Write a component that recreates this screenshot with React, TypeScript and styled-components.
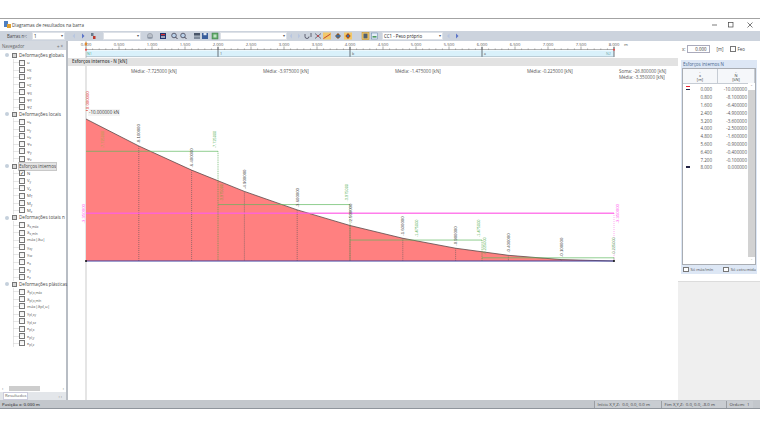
import React from "react";
import styled, { createGlobalStyle } from "styled-components";

const Global = createGlobalStyle`
  html, body { margin: 0; padding: 0; background: #fff; }
  body { font-family: "Open Sans", "Liberation Sans", sans-serif; color: #333; }
`;
const Page = styled.div`width: 760px; height: 428px; padding-top: 18px; box-sizing: border-box; overflow: hidden;`;
const Win = styled.div`height: 391px; display: flex; flex-direction: column; border-top: 1px solid #a3a3a3; box-sizing: border-box; background: #f0f0f0;`;
const TitleBar = styled.div`height: 11.5px; flex: none; background: #fff; display: flex; align-items: center; padding-left: 4px; font-size: 4.55px; color: #444;`;
const TitleIcon = styled.svg`flex: none; margin-right: 1px;`;
const Spacer = styled.div`flex: 1;`;
const WinBtn = styled.div<{ $w: number }>`width: ${p => p.$w}px; flex: none; display: flex; justify-content: center;`;
const Toolbar = styled.div`height: 10.5px; flex: none; background: #ccd3dd; display: flex; align-items: center; font-size: 4.4px; color: #444;`;
const Lbl = styled.span<{ $w: number }>`width: ${p => p.$w}px; flex: none; white-space: nowrap;`;
const Input = styled.div<{ $w: number }>`width: ${p => p.$w}px; height: 8px; flex: none; box-sizing: border-box; background: #fff; border: 0.7px solid #dde1e7; line-height: 6.6px; font-size: 4.4px; padding-left: 1px; color: #222; position: relative; white-space: nowrap;`;
const Caret = styled.span`position: absolute; right: 1px; top: 0; color: #555; font-size: 3.5px;`;
const Icons = styled.svg`flex: none; display: block;`;
const Body = styled.div`flex: 1; display: flex; min-height: 0;`;
const Nav = styled.div`width: 68px; flex: none; box-sizing: border-box; background: #fff; display: flex; flex-direction: column; border-right: 2px solid #b8bdc4;`;
const NavHead = styled.div`height: 9px; flex: none; background: #d4d9e0; display: flex; align-items: center; justify-content: space-between; padding: 0 3px 0 2px; font-size: 4.4px; color: #666;`;
const Tree = styled.div`flex: 1; padding-top: 1.5px; display: flex; flex-direction: column;`;
const GroupRow = styled.div`height: 7.4px; flex: none; display: flex; align-items: center; font-size: 4.6px; line-height: 7px; white-space: nowrap; color: #444; padding-left: 5px; gap: 2px;`;
const GroupLabel = styled.span<{ $sel?: boolean }>`background: ${p => (p.$sel ? "#e3e3e3" : "transparent")}; outline: ${p => (p.$sel ? "0.5px solid #c8c8c8" : "none")};`;
const Expander = styled.span`width: 4px; height: 4px; flex: none; border-radius: 50%; background: #c5d0dc; margin-right: 1px;`;
const GroupIcon = styled.span`width: 5px; height: 5px; flex: none; box-sizing: border-box; background: #d6d6d6; border: 0.6px solid #777;`;
const ItemRow = styled.div`height: 7.4px; flex: none; display: flex; align-items: center; padding-left: 19px; gap: 2px; font-size: 4.2px; color: #555; white-space: nowrap;
  background:
    linear-gradient(#d5d5d5, #d5d5d5) 13px 50% / 6px 0.6px no-repeat,
    linear-gradient(#d5d5d5, #d5d5d5) 13px 0 / 0.6px 100% no-repeat;
  sub { font-size: 3.2px; line-height: 0; vertical-align: -1px; }`;
const Check = styled.span`width: 6px; height: 6px; flex: none; box-sizing: border-box; background: linear-gradient(#eee, #fff); border: 0.7px solid #777; font-size: 5px; line-height: 4.4px; color: #111; text-align: center;`;
const HScroll = styled.div`height: 7px; flex: none; display: flex; align-items: center; justify-content: space-between; padding: 0 2px; font-size: 4px; background: #fff; color: #333; position: relative;`;
const Thumb = styled.div`position: absolute; left: 9px; top: 1px; width: 31px; height: 5px; background: #cdcdcd;`;
const TabRow = styled.div`height: 8px; flex: none; background: #e3e6ea; display: flex; align-items: center; justify-content: space-between; padding: 0 4px 0 3px; font-size: 4.2px; color: #666;`;
const TabBtn = styled.span`background: #fff; border: 0.5px solid #ccd; padding: 0 1px; line-height: 6px;`;
const Main = styled.div`flex: 1; min-width: 0; background: #fff; display: flex; flex-direction: column;`;
const ChartHead = styled.div`height: 7.5px; flex: none; background: #e2e2e2; font-size: 4.5px; line-height: 7px; padding-left: 4px; color: #444; font-weight: 600;`;
const ChartArea = styled.div`flex: 1; min-height: 0;`;
const Right = styled.div`width: 82px; flex: none; background: #f0f0f0; display: flex; flex-direction: column;`;
const XBar = styled.div`height: 15px; flex: none; background: #fff; display: flex; align-items: center; padding-left: 4px; font-size: 4.4px; color: #444;`;
const XInput = styled.div`width: 23px; height: 8px; box-sizing: border-box; border: 0.6px solid #aab; line-height: 7px; text-align: right; padding-right: 3px; color: #333; margin: 0 6px 0 2px;`;
const Box = styled.div`width: 6px; height: 6px; flex: none; box-sizing: border-box; border: 0.6px solid #777; background: #fff; margin: 0 1px 0 7px;`;
const Card = styled.div`height: 225px; flex: none; box-sizing: border-box; background: #fff; padding: 4px 0 7px 0; display: flex; flex-direction: column; font-size: 4.5px;`;
const CardBody = styled.div`flex: 1; min-height: 0; margin: 0 3px; background: #dde7f5; display: flex; flex-direction: column; padding: 0 1px;`;
const CardTitle = styled.div`height: 8px; flex: none; line-height: 8px; color: #45658d; padding-left: 1px;`;
const Table = styled.div`flex: 1; min-height: 0; background: #fff; border: 0.6px solid #a9adb3; box-sizing: border-box; display: flex; flex-direction: column; position: relative;`;
const Head = styled.div`height: 14px; flex: none; display: grid; grid-template-columns: 35px 1fr; background: #f5f7fa; border-bottom: 0.6px solid #c6ccd4;`;
const HeadCell = styled.div`display: flex; flex-direction: column; align-items: center; justify-content: center; line-height: 4.2px; border-right: 0.6px solid #c6ccd4; color: #444; font-size: 4px;`;
const Rows = styled.div`padding-top: 1.5px;`;
const Row = styled.div`height: 7.8px; display: grid; grid-template-columns: 35px 29px; align-items: center; color: #555; font-size: 4.5px; position: relative;`;
const CellA = styled.span`text-align: right; padding-right: 6px;`;
const CellB = styled.span`text-align: right;`;
const Flag = styled.span<{ $c: string; $t: number }>`position: absolute; left: 3px; top: ${p => p.$t}px; width: 4px; height: 1.6px; background: ${p => p.$c};`;
const VScroll = styled.div`position: absolute; right: 0; top: 14px; bottom: 0; width: 7px; background: #d2d2d2; display: flex; flex-direction: column; justify-content: space-between; align-items: center; font-size: 4px; color: #333;`;
const ScrollEnd = styled.span`width: 100%; background: #fff; text-align: center; line-height: 7px;`;
const Opts = styled.div`height: 9px; flex: none; display: flex; align-items: center; justify-content: space-between; padding-left: 1px; font-size: 4.1px; color: #555; white-space: nowrap;`;
const Opt = styled.span`display: flex; align-items: center; gap: 2px;`;
const OptBox = styled.span`width: 5.5px; height: 5.5px; box-sizing: border-box; border: 0.6px solid #777; background: #fff;`;
const RightRest = styled.div`flex: 1; border-top: 1px solid #dcdcdc; background: #efefef;`;
const Status = styled.div`height: 8px; flex: none; background: #c3c7cc; display: flex; align-items: center; font-size: 4.3px; color: #444;`;
const StatusCell = styled.div<{ $w: number }>`width: ${p => p.$w}px; flex: none; border-left: 0.6px solid #9a9ea4; padding-left: 2.5px; box-sizing: border-box; white-space: pre; line-height: 7px; background: #c9cdd2;`;
const StatusMain = styled.div`flex: 1; padding-left: 2px; font-weight: 600; color: #4a4a4a;`;
const Bottom = styled.div`height: 1px; flex: none; background: #8f959c;`;

const X0 = 18;
const S = 66;
const px = (m: number) => X0 + m * S;

function Ruler() {
  const ticks = [];
  for (let i = 0; i <= 80; i++) ticks.push(i);
  return (
    <svg width="610" height="17" style={{ display: "block", flex: "none" }}>
      {ticks.map(i => {
        const x = X0 + i * 6.6;
        const major = i % 5 === 0;
        return <line key={i} x1={x} x2={x} y1={major ? 5.5 : 7.5} y2={8.7} stroke="#555" strokeWidth="0.5" />;
      })}
      <line x1={X0} x2={px(8)} y1="8.5" y2="8.5" stroke="#666" strokeWidth="0.5" />
      {Array.from({ length: 17 }, (_, i) => (
        <text key={i} x={px(i / 2)} y="4.6" fontSize="4.2" fill="#555" textAnchor="middle" fontFamily="Open Sans">
          {(i / 2).toFixed(3)}
        </text>
      ))}
      <text x={px(8) + 10} y="4.6" fontSize="4.2" fill="#555">m</text>
      <rect x={X0} y="9.5" width={528} height="6" fill="#d9f1fb" />
      {[2, 4, 6, 8].map(m => (
        <line key={m} x1={px(m)} x2={px(m)} y1="6" y2="16" stroke="#4a4f55" strokeWidth="0.8" />
      ))}
      <line x1={X0} x2={X0} y1="0" y2="17" stroke="#a8a8a8" strokeWidth="0.7" />
      <line x1={X0} x2={px(8)} y1="15.6" y2="15.6" stroke="#7f9aa8" strokeWidth="0.5" />
      <rect x={X0 - 1} y="1.5" width="2" height="3" fill="#e08a30" />
      <circle cx={X0} cy="8.7" r="1" fill="#e44" />
      <circle cx={px(8)} cy="8.7" r="1" fill="#e44" />
      <text x={X0 + 1} y="14" fontSize="3.6" fill="#4a8">N1</text>
      <text x={px(2) + 2} y="14" fontSize="3.6" fill="#555">1</text>
      <text x={px(4) + 2} y="14" fontSize="3.6" fill="#555">b</text>
      <text x={px(6) + 2} y="14" fontSize="3.6" fill="#555">a</text>
      <text x={px(8) - 8} y="14" fontSize="3.6" fill="#7aa">N2</text>
    </svg>
  );
}

const data: [number, number][] = [[0, -10], [0.8, -8.1], [1.6, -6.4], [2.4, -4.9], [3.2, -3.6], [4, -2.5], [4.8, -1.6], [5.6, -0.9], [6.4, -0.4], [7.2, -0.1], [8, 0]];
const BASE = 195;
const U = 14.2;
const ya = (v: number) => BASE + v * U;
const VLabel = ({ x, y, t, c, s = 4.3 }: { x: number; y: number; t: string; c: string; s?: number }) => (
  <text transform={`translate(${x + 1.6} ${y}) rotate(-90)`} fontSize={s} fill={c} fontFamily="Liberation Sans">{t}</text>
);

function Chart() {
  const curve = data.map(([m, v]) => `${px(m)},${ya(v)}`).join(" ");
  const green = "#55b055";
  const means: [number, number, number][] = [[0, 2, -7.725], [2, 4, -3.975], [4, 6, -1.475], [6, 8, -0.225]];
  const means2 = ["-7.725000 [kN]", "-3.975000 [kN]", "-1.475000 [kN]", "-0.225000 [kN]"];
  const blacks: [number, number, string][] = [[0.8, -8.1, "-8.100000"], [1.6, -6.4, "-6.400000"], [2.4, -4.9, "-4.900000"], [3.2, -3.6, "-3.600000"], [4, -2.5, "-2.500000"], [4.8, -1.6, "-1.600000"], [5.6, -0.9, "-0.900000"], [6.4, -0.4, "-0.400000"], [7.2, -0.1, "-0.100000"]];
  const greens: [number, number, string, string][] = [
    [34, -7.725, "-7.725000", "#b3a24a"], [146, -7.725, "-7.725000", green],
    [153, -3.975, "-3.975000", "#8f9a3c"], [278, -3.975, "-3.975000", green],
    [348, -1.475, "-1.475000", green], [410, -1.475, "-1.475000", green],
    [416, -0.225, "-0.225000", green], [545, -0.225, "-0.225000", green],
  ];
  const magY = Math.round(ya(-3.35));
  return (
    <svg width="610" height="336" style={{ display: "block" }}>
      {means2.map((t, i) => (
        <text key={t} x={[63, 195, 327, 459][i]} y="7" fontSize="4.5" fill="#555" fontFamily="Open Sans">{"Média: " + t}</text>
      ))}
      <text x="551" y="7" fontSize="4.5" fill="#555" fontFamily="Open Sans">Soma: -26.800000 [kN]</text>
      <text x="551" y="13" fontSize="4.5" fill="#555" fontFamily="Open Sans">Média: -3.350000 [kN]</text>

      <line x1={X0} x2={X0} y1="0" y2="336" stroke="#b4b4b4" strokeWidth="0.7" />
      <polygon points={`${curve} ${px(8)},${BASE} ${X0},${BASE}`} fill="#ff8080" />
      <polyline points={curve} fill="none" stroke="#5c4a4a" strokeWidth="0.8" />

      {data.slice(1, -1).map(([m, v]) => (
        <line key={m} x1={px(m)} x2={px(m)} y1={ya(v)} y2={BASE} stroke="#555" strokeWidth="0.6" strokeDasharray="1 1" />
      ))}

      <rect x={X0} y={magY - 0.5} width={528} height="1.5" fill="#ff5ce6" opacity="0.8" />
      <line x1={px(8)} x2={px(8)} y1={magY} y2={BASE} stroke="#ff55dd" strokeWidth="0.5" strokeDasharray="1 1" />

      {means.map(([a, b, v]) => (
        <g key={a}>
          <line x1={px(a)} x2={px(b)} y1={ya(v)} y2={ya(v)} stroke="#5cb85c" strokeWidth="0.9" opacity="0.75" />
          <line x1={px(b)} x2={px(b)} y1={ya(v)} y2={BASE} stroke="#3a9f3a" strokeWidth="0.6" strokeDasharray="1 0.8" />
        </g>
      ))}

      <line x1={X0} x2={px(8)} y1={BASE} y2={BASE} stroke="#3c3f9e" strokeWidth="1" />
      <circle cx={X0} cy={BASE} r="1" fill="#111" />
      <circle cx={px(8)} cy={BASE} r="1" fill="#111" />

      <VLabel x={X0 + 1} y={ya(-10) - 6} t="-10.000000" c="#e03030" />
      <rect x={X0 + 2} y={ya(-10) - 10} width="32" height="7" fill="#f4f4f4" />
      <text x={X0 + 3} y={ya(-10) - 4.8} fontSize="4.5" fill="#333" fontFamily="Open Sans">-10.000000 kN</text>

      {blacks.map(([m, v, t]) => (
        <VLabel key={t} x={px(m)} y={ya(v) - 2.5} t={t} c="#444" />
      ))}
      {greens.map(([x, v, t, c]) => (
        <VLabel key={`${x}`} x={x} y={ya(v) - 3} t={t} c={c} s={3.9} />
      ))}

      <VLabel x={X0 - 3} y={ya(-3.35) + 10} t="-3.350000" c="#ff55ee" />
      <VLabel x={px(8) + 3} y={ya(-3.35) + 10} t="-3.350000" c="#ff55ee" />
    </svg>
  );
}

function TB1() {
  return (
    <Icons width="35" height="8" viewBox="0 0 35 8">
      <path d="M7 1.5L4.5 4 7 6.5z" fill="#b8c6e0" />
      <path d="M14 1.5L16.5 4 14 6.5z" fill="#5b74c8" />
      <rect x="23" y="1" width="2.5" height="3" fill="#6a7a8c" />
      <rect x="25" y="4" width="2.5" height="3" fill="#c0392b" />
    </Icons>
  );
}
function TB2() {
  return (
    <Icons width="75" height="8" viewBox="0 0 75 8">
      <circle cx="5" cy="4" r="2.6" fill="#b9bfc8" stroke="#7c8491" strokeWidth=".5" />
      <rect x="2.5" y="5" width="5" height="1.5" fill="#8d97a6" />
      <rect x="15" y="1" width="6" height="6" fill="#23356e" />
      <rect x="16" y="2" width="4" height="1.2" fill="#d33" />
      <rect x="16" y="4.4" width="4" height="1.2" fill="#eee" />
      <circle cx="29" cy="3.5" r="2.3" fill="#b9d0e8" stroke="#445" strokeWidth=".8" />
      <line x1="30.5" y1="5" x2="32.5" y2="7" stroke="#445" strokeWidth="1" />
      <circle cx="38" cy="3.5" r="2.3" fill="#b9d0e8" stroke="#445" strokeWidth=".8" />
      <line x1="39.5" y1="5" x2="41.5" y2="7" stroke="#445" strokeWidth="1" />
      <rect x="49" y="1" width="6" height="2.6" fill="#4a5668" />
      <rect x="49" y="4.4" width="6" height="2.6" fill="#7f8b9b" />
      <rect x="57" y="1" width="6" height="6" fill="#3b5f9c" />
      <rect x="58.5" y="1" width="3" height="2.2" fill="#dfe7f2" />
      <rect x="67" y="1" width="6" height="6" fill="#5ea869" stroke="#3c7c49" strokeWidth=".5" />
      <rect x="68.5" y="2.5" width="3" height="3" fill="#bfe3c4" />
    </Icons>
  );
}
function TB3() {
  return (
    <Icons width="68" height="8" viewBox="0 0 68 8">
      <path d="M4 1.5L1.8 4 4 6.5z" fill="#b8c6e0" />
      <path d="M10 1.5L12.2 4 10 6.5z" fill="#b8c6e0" />
      <path d="M17 2v2.5a2 2 0 0 0 4 0M23 1v4" fill="none" stroke="#445" strokeWidth=".8" />
      <path d="M27 1.5l3 2.5-3 2.5M33 1.5l-3 2.5 3 2.5" fill="none" stroke="#445" strokeWidth=".7" />
      <circle cx="30" cy="4" r=".9" fill="#c44" />
      <rect x="35" y="0.5" width="8" height="7" fill="#f2c869" />
      <path d="M35.5 6.5L42.5 2" stroke="#c0392b" strokeWidth=".9" />
      <path d="M50 1l3 3-3 3-3-3z" fill="#8a5a2a" />
      <rect x="48" y="3" width="4" height="2.4" fill="#466a94" />
      <rect x="56" y="0.5" width="8" height="7" fill="#f2c869" />
      <path d="M60 1l2.7 3-2.7 3-2.7-3z" fill="#a44d20" />
      <rect x="59" y="3" width="2" height="2" fill="#3f6aa0" />
    </Icons>
  );
}
function TB4() {
  return (
    <Icons width="18" height="8" viewBox="0 0 18 8">
      <rect x="1" y="0.3" width="7" height="7.4" fill="#f2c869" stroke="#b98a2a" strokeWidth=".5" />
      <rect x="2.5" y="1.6" width="4" height="4.8" fill="#50606f" />
      <rect x="10.5" y="1" width="6" height="6" fill="#e5eef7" stroke="#5a7ea8" strokeWidth=".5" />
      <rect x="11.5" y="4" width="4" height="1.6" fill="#4d9a5e" />
    </Icons>
  );
}
const Tri = () => (
  <Icons width="16" height="8" viewBox="0 0 16 8">
    <path d="M5.5 1.5L3 4 5.5 6.5z" fill="#b8c6e0" />
    <path d="M12 1.5L14.5 4 12 6.5z" fill="#5b74c8" />
  </Icons>
);

type Item = React.ReactNode;
const S1 = (b: string, s: string): Item => <>{b}<sub>{s}</sub></>;
const groups: { name: string; sel?: boolean; items: Item[]; checked?: number }[] = [
  { name: "Deformações globais", items: ["u", S1("u","X"), S1("u","Y"), S1("u","Z"), S1("φ","X"), S1("φ","Y"), S1("φ","Z")] },
  { name: "Deformações locais", items: [S1("u","x"), S1("u","y"), S1("u","z"), S1("φ","x"), S1("φ","y"), S1("φ","z")] },
  { name: "Esforços internos", sel: true, checked: 0, items: ["N", S1("V","y"), S1("V","z"), S1("M","T"), S1("M","y"), S1("M","z")] },
  { name: "Deformações totais n", items: [S1("δ","x,máx"), S1("δ","x,mín"), "máx|δu|", S1("γ","xy"), S1("γ","xz"), S1("κ","x"), S1("κ","y"), S1("κ","z")] },
  { name: "Deformações plásticas", items: [S1("δ","pl,x,máx"), S1("δ","pl,x,mín"), "máx|δpl,u|", S1("γ","pl,xy"), S1("γ","pl,xz"), S1("κ","pl,x"), S1("κ","pl,y"), S1("κ","pl,z")] },
];
const rows = [["0.000","-10.000000"],["0.800","-8.100000"],["1.600","-6.400000"],["2.400","-4.900000"],["3.200","-3.600000"],["4.000","-2.500000"],["4.800","-1.600000"],["5.600","-0.900000"],["6.400","-0.400000"],["7.200","-0.100000"],["8.000","0.000000"]];

export default function App() {
  return (
    <Page>
      <Global />
      <Win>
        <TitleBar>
          <TitleIcon width="7" height="7" viewBox="0 0 7 7"><rect x="0" y="0" width="4" height="6" fill="#4f7fc0" /><rect x="3" y="3" width="4" height="4" fill="#e0a030" /></TitleIcon>
          Diagramas de resultados na barra
          <Spacer />
          <WinBtn $w={13}><svg width="6" height="6"><line x1="0" x2="5" y1="3" y2="3" stroke="#444" strokeWidth=".7" /></svg></WinBtn>
          <WinBtn $w={19}><svg width="6" height="6"><rect x=".5" y=".5" width="4.5" height="4.5" fill="none" stroke="#444" strokeWidth=".7" /></svg></WinBtn>
          <WinBtn $w={20}><svg width="6" height="6"><path d="M.5.5l5 5M5.5.5l-5 5" stroke="#444" strokeWidth=".7" /></svg></WinBtn>
        </TitleBar>
        <Toolbar>
          <Lbl $w={7} />
          <Lbl $w={25}>Barras nº:</Lbl>
          <Input $w={33}>1<Caret>▾</Caret></Input>
          <Lbl $w={3} />
          <TB1 />
          <Input $w={38}><Caret>▾</Caret></Input>
          <Lbl $w={4} />
          <TB2 />
          <Input $w={67}><Caret>▾</Caret></Input>
          <Lbl $w={1} />
          <TB3 />
          <Lbl $w={5} />
          <TB4 />
          <Lbl $w={3} />
          <Input $w={61}>CC1 - Peso próprio<Caret>▾</Caret></Input>
          <Lbl $w={1} />
          <Tri />
        </Toolbar>
        <Body>
          <Nav>
            <NavHead><span>Navegador</span><span>⌖ ×</span></NavHead>
            <Tree>
              {groups.map(g => (
                <React.Fragment key={g.name}>
                  <GroupRow>
                    <Expander />
                    <GroupIcon />
                    <GroupLabel $sel={g.sel}>{g.name}</GroupLabel>
                  </GroupRow>
                  {g.items.map((it, i) => (
                    <ItemRow key={i}>
                      <Check>{g.checked === i ? "✓" : ""}</Check>
                      <span>{it}</span>
                    </ItemRow>
                  ))}
                </React.Fragment>
              ))}
            </Tree>
            <HScroll><span>‹</span><Thumb /><span>›</span></HScroll>
            <TabRow><TabBtn>Resultados</TabBtn><span>‹ ›</span></TabRow>
          </Nav>
          <Main>
            <Ruler />
            <ChartHead>Esforços internos - N [kN]</ChartHead>
            <ChartArea><Chart /></ChartArea>
          </Main>
          <Right>
            <XBar>x:<XInput>0.000</XInput>[m]<Box />Feo</XBar>
            <Card>
              <CardBody>
                <CardTitle>Esforços internos N</CardTitle>
                <Table>
                  <Head>
                    <HeadCell><span>-</span><span>x</span><span>[m]</span></HeadCell>
                    <HeadCell><span>-</span><span>N</span><span>[kN]</span></HeadCell>
                  </Head>
                  <Rows>
                    {rows.map((r, i) => (
                      <Row key={r[0]}>
                        {i === 0 && <Flag $c="#e23" $t={0} />}
                        {(i === 0 || i === 10) && <Flag $c="#224" $t={3} />}
                        <CellA>{r[0]}</CellA>
                        <CellB>{r[1]}</CellB>
                      </Row>
                    ))}
                  </Rows>
                  <VScroll><ScrollEnd>ˆ</ScrollEnd><ScrollEnd>ˇ</ScrollEnd></VScroll>
                </Table>
                <Opts>
                  <Opt><OptBox />Só máx/mín</Opt>
                  <Opt><OptBox />Só extremida</Opt>
                </Opts>
              </CardBody>
            </Card>
            <RightRest />
          </Right>
        </Body>
        <Status>
          <StatusMain>Posição x: 0.000 m</StatusMain>
          <StatusCell $w={67}>Início X,Y,Z:  0.0, 0.0, 0.0 m</StatusCell>
          <StatusCell $w={65}>Fim X,Y,Z:  0.0, 0.0, -8.0 m</StatusCell>
          <StatusCell $w={27}>Ordem:  1</StatusCell>
          <StatusCell $w={7} />
        </Status>
        <Bottom />
      </Win>
    </Page>
  );
}
